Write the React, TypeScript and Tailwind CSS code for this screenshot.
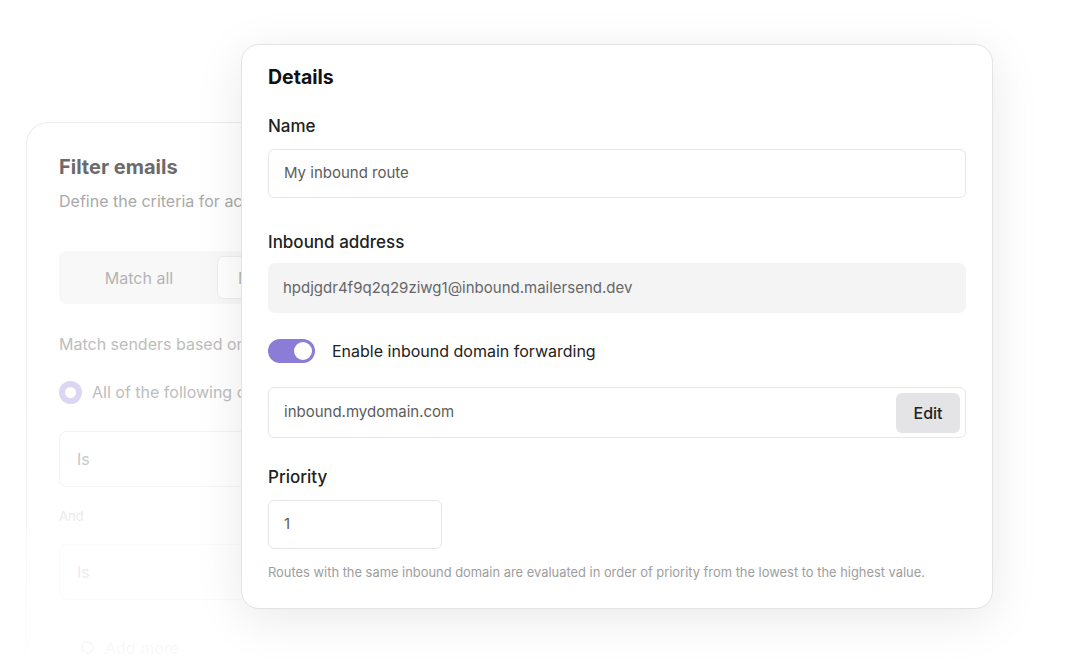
import React from 'react';

const font = { fontFamily: 'Inter, "Noto Sans", sans-serif' };

const FilterCard = () => (
    <div className="absolute left-[26px] top-[122px] h-[620px] w-[250px] overflow-hidden rounded-l-[22px] border border-r-0 border-[#ececec] bg-white pl-[32px] pt-[30px]">
        <div className="text-[20px] font-bold leading-[28px] text-[#6b6b6b] whitespace-nowrap">Filter emails</div>
        <div className="mt-[8px] text-[16px] text-[#a9a9a9] whitespace-nowrap">Define the criteria for accepting</div>
        <div className="mt-[38px] flex h-[53px] w-[360px] items-center rounded-[8px] bg-[#f8f8f8] px-[5px]">
            <div className="flex w-[150px] shrink-0 justify-center text-[16px] text-[#b4b4b4]">Match all</div>
            <div className="ml-[3px] flex h-[43px] flex-1 items-center rounded-[6px] border border-[#eeeeee] bg-white pl-[20px] text-[16px] text-[#b4b4b4]">Match</div>
        </div>
        <div className="mt-[28px] text-[16px] text-[#bdbdbd] whitespace-nowrap">Match senders based on</div>
        <div className="mt-[24px] flex items-center gap-[10px]">
            <div className="h-[23px] w-[23px] shrink-0 rounded-full border-[6px] border-[#dcd6f3] bg-white" />
            <div className="text-[16px] text-[#bdbdbd] whitespace-nowrap">All of the following conditions</div>
        </div>
        <div className="mt-[27px] flex h-[56px] w-[360px] shrink-0 items-center rounded-[8px] border border-[#f0f0f0] pl-[17px] text-[16px] text-[#b4b4b4]">Is</div>
        <div className="mt-[20px] text-[13px] text-[#d6d6d6]">And</div>
        <div className="mt-[17px] flex h-[56px] w-[360px] shrink-0 items-center rounded-[8px] border border-[#f3f3f3] pl-[17px] text-[16px] text-[#c8c8c8]">Is</div>
        <div className="mt-[36px] flex items-center gap-[11px] pl-[22px] text-[16px] text-[#d8d8d8]">
            <div className="h-[13px] w-[13px] shrink-0 rounded-full border-2 border-[#dcdcdc]" />
            Add more
        </div>
    </div>
);

const Field = ({ children, className = '' }: { children: React.ReactNode; className?: string }) => (
    <div className={`flex h-[49px] items-center rounded-[6px] border border-[#e6e6e6] bg-white pl-[15px] text-[15px] text-[#5c5c5c] ${className}`}>
        {children}
    </div>
);

const DetailsCard = () => (
    <div className="absolute left-[241px] top-[44px] flex h-[565px] w-[752px] flex-col rounded-[18px] border border-[#e3e3e3] bg-white px-[26px] pt-[19px] shadow-[0_10px_50px_rgba(0,0,0,0.09)]">
        <div className="text-[19.5px] font-bold leading-[26px] text-[#111]">Details</div>
        <div className="mt-[25px] text-[17px] font-medium leading-[22px] text-[#222]">Name</div>
        <Field className="mt-[12px]">My inbound route</Field>
        <div className="mt-[33px] text-[17px] font-medium leading-[22px] text-[#222]">Inbound address</div>
        <div className="mt-[10px] flex h-[50px] items-center rounded-[7px] bg-[#f4f4f5] pl-[15px] text-[15px] text-[#666]">hpdjgdr4f9q2q29ziwg1@inbound.mailersend.dev</div>
        <div className="mt-[26px] flex items-center gap-[17px]">
            <div className="flex h-[24px] w-[47px] shrink-0 items-center justify-end rounded-full bg-[#8b7cd8] pr-[3px]">
                <div className="h-[18px] w-[18px] rounded-full bg-white" />
            </div>
            <div className="text-[16px] leading-[24px] text-[#222]">Enable inbound domain forwarding</div>
        </div>
        <div className="mt-[24px] flex h-[51px] items-center justify-between rounded-[6px] border border-[#e6e6e6] pl-[15px] pr-[5px]">
            <span className="text-[15px] text-[#5c5c5c]">inbound.mydomain.com</span>
            <button type="button" className="flex h-[40px] w-[64px] items-center justify-center rounded-[6px] bg-[#e4e4e7] text-[16px] font-medium text-[#222]">Edit</button>
        </div>
        <div className="mt-[28px] text-[17px] font-medium leading-[22px] text-[#222]">Priority</div>
        <Field className="mt-[12px] w-[174px]">1</Field>
        <div className="mt-[14px] text-[12.9px] text-[#9e9e9e]">Routes with the same inbound domain are evaluated in order of priority from the lowest to the highest value.</div>
    </div>
);

export default function App() {
    return (
        <div className="relative h-[660px] w-[1080px] overflow-hidden bg-white" style={font}>
            <FilterCard />
            {/* fade the back card out toward the bottom */}
            <div className="absolute left-0 top-[400px] h-[260px] w-[300px] bg-gradient-to-b from-white/0 via-white/55 to-white/85" />
            <DetailsCard />
        </div>
    );
}
